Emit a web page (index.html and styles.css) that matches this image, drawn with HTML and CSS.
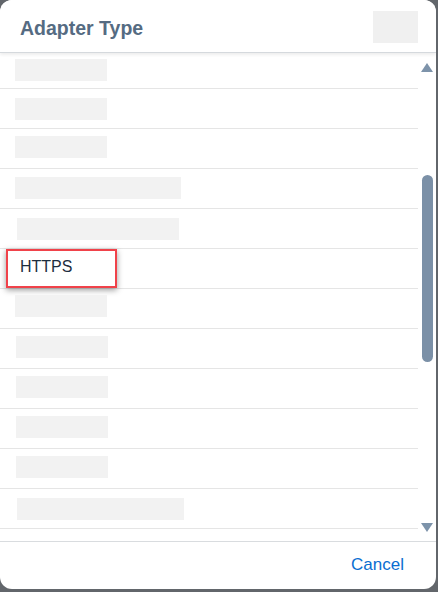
FILE: index.html
```html
<!DOCTYPE html>
<html>
<head>
<meta charset="utf-8">
<link rel="stylesheet" href="styles.css">
</head>
<body>
<div class="dialog">
  <header class="head">
    <h1 class="title">Adapter Type</h1>
    <div class="head-ph"></div>
  </header>
  <div class="body">
    <div class="list">
      <div class="rows">
        <div class="row o10"><div class="ph short"></div></div>
        <div class="row o9"><div class="ph short"></div></div>
        <div class="row"><div class="ph short"></div></div>
        <div class="row o8"><div class="ph long"></div></div>
        <div class="row o9"><div class="ph long2"></div></div>
        <div class="row o8"><span class="item">HTTPS</span><div class="mark"></div></div>
        <div class="row o6"><div class="ph short"></div></div>
        <div class="row"><div class="ph short s1"></div></div>
        <div class="row"><div class="ph short s1"></div></div>
        <div class="row"><div class="ph short s1"></div></div>
        <div class="row"><div class="ph short s1"></div></div>
        <div class="row o9"><div class="ph long3"></div></div>
        <div class="row"></div>
      </div>
    </div>
    <div class="scrollbar">
      <div class="arrow up"></div>
      <div class="track"><div class="thumb"></div></div>
      <div class="arrow down"></div>
    </div>
  </div>
  <footer class="foot">
    <span class="cancel">Cancel</span>
  </footer>
</div>
</body>
</html>
```
FILE: styles.css
```css
html, body {
  margin: 0;
  padding: 0;
}
body {
  width: 438px;
  height: 592px;
  background: #62666b;
  font-family: "Liberation Sans", Arial, sans-serif;
  overflow: hidden;
}
.dialog {
  width: 436px;
  height: 589px;
  background: #fff;
  border-radius: 12px;
  overflow: hidden;
  display: flex;
  flex-direction: column;
}
.head {
  height: 52px;
  flex: none;
  display: flex;
  align-items: flex-start;
  justify-content: space-between;
  border-bottom: 1px solid #d5d9dd;
  box-shadow: 0 2px 3px rgba(0, 0, 0, 0.07);
  position: relative;
  z-index: 2;
  background: #fff;
}
.title {
  margin: 16px 0 0 20px;
  font-size: 19.5px;
  line-height: 24px;
  font-weight: bold;
  color: #556b82;
}
.head-ph {
  width: 45px;
  height: 32px;
  margin: 11px 18px 0 0;
  background: #f0f0f0;
}
.body {
  flex: 1;
  display: flex;
  min-height: 0;
  overflow: hidden;
}
.list {
  width: 418px;
  overflow: hidden;
}
.rows {
  margin-top: -4px;
}
.row {
  height: 39px;
  box-sizing: border-box;
  height: 40px;
  border-bottom: 1px solid #e5e5e5;
  padding-top: 7px;
  position: relative;
}
.row.o6 { padding-top: 6px; }
.row.o8 { padding-top: 8px; }
.row.o9 { padding-top: 9px; }
.row.o10 { padding-top: 10px; }
.ph {
  height: 22px;
  background: #f2f2f2;
  margin-left: 16px;
}
.short { width: 92px; margin-left: 15px; }
.short.s1 { margin-left: 16px; }
.long { width: 166px; margin-left: 15px; }
.long2 { width: 162px; margin-left: 17px; }
.long3 { width: 167px; margin-left: 17px; }
.item {
  display: block;
  margin-left: 20px;
  font-size: 16px;
  line-height: 20px;
  color: #1d2d3e;
}
.mark {
  position: absolute;
  left: 6px;
  top: 0;
  width: 107px;
  height: 35px;
  border: 2px solid #f0424a;
  box-shadow: 0 2px 6px rgba(0, 0, 0, 0.4);
}
.scrollbar {
  width: 18px;
  display: flex;
  flex-direction: column;
  align-items: center;
  padding-top: 10px;
  padding-bottom: 9px;
  box-sizing: border-box;
}
.arrow {
  width: 0;
  height: 0;
  border-left: 6.5px solid transparent;
  border-right: 6.5px solid transparent;
  flex: none;
}
.arrow.up {
  border-bottom: 9px solid #7d93aa;
}
.arrow.down {
  border-top: 9px solid #7d93aa;
}
.track {
  flex: 1;
  width: 11px;
  padding-top: 103px;
  margin-left: 1px;
}
.thumb {
  width: 11px;
  height: 187px;
  border-radius: 6px;
  background: #7b90a7;
}
.foot {
  flex: none;
  height: 47px;
  border-top: 1px solid #d9dcdf;
  display: flex;
  justify-content: flex-end;
  align-items: flex-start;
}
.cancel {
  margin: 13px 32px 0 0;
  font-size: 17px;
  line-height: 20px;
  color: #0a6ed1;
}
```
